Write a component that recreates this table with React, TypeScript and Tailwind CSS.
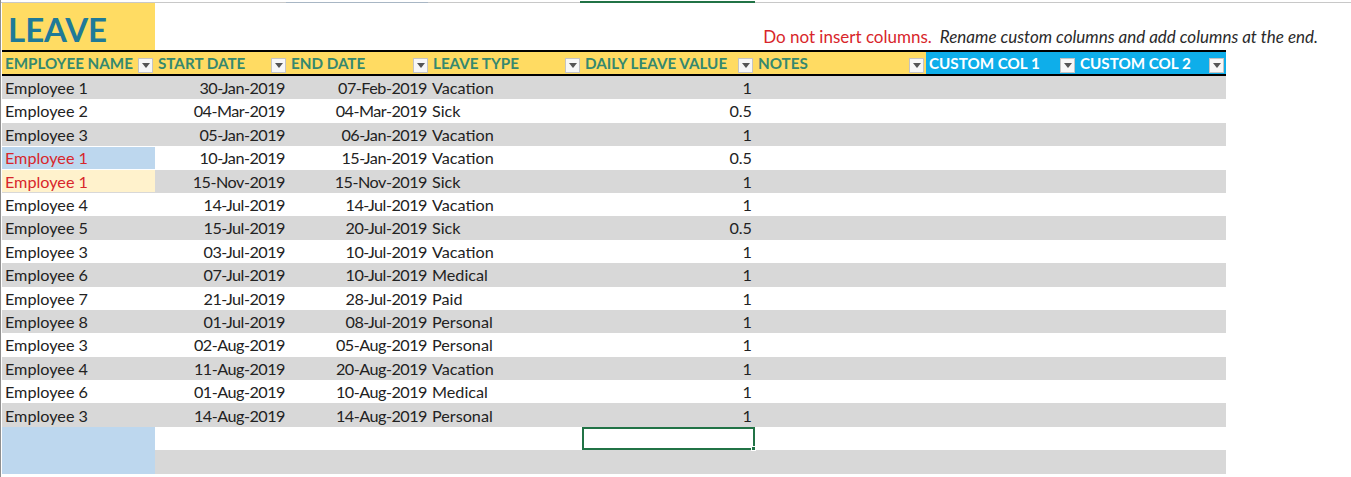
import React from 'react';

type Row = { name: string; start: string; end: string; type: string; value: string; nameBg?: string; red?: boolean };

const rows: Row[] = [
  { name: 'Employee 1', start: '30-Jan-2019', end: '07-Feb-2019', type: 'Vacation', value: '1' },
  { name: 'Employee 2', start: '04-Mar-2019', end: '04-Mar-2019', type: 'Sick', value: '0.5' },
  { name: 'Employee 3', start: '05-Jan-2019', end: '06-Jan-2019', type: 'Vacation', value: '1' },
  { name: 'Employee 1', start: '10-Jan-2019', end: '15-Jan-2019', type: 'Vacation', value: '0.5', nameBg: 'bg-[#bdd7ee]', red: true },
  { name: 'Employee 1', start: '15-Nov-2019', end: '15-Nov-2019', type: 'Sick', value: '1', nameBg: 'bg-[#fff2cc]', red: true },
  { name: 'Employee 4', start: '14-Jul-2019', end: '14-Jul-2019', type: 'Vacation', value: '1' },
  { name: 'Employee 5', start: '15-Jul-2019', end: '20-Jul-2019', type: 'Sick', value: '0.5' },
  { name: 'Employee 3', start: '03-Jul-2019', end: '10-Jul-2019', type: 'Vacation', value: '1' },
  { name: 'Employee 6', start: '07-Jul-2019', end: '10-Jul-2019', type: 'Medical', value: '1' },
  { name: 'Employee 7', start: '21-Jul-2019', end: '28-Jul-2019', type: 'Paid', value: '1' },
  { name: 'Employee 8', start: '01-Jul-2019', end: '08-Jul-2019', type: 'Personal', value: '1' },
  { name: 'Employee 3', start: '02-Aug-2019', end: '05-Aug-2019', type: 'Personal', value: '1' },
  { name: 'Employee 4', start: '11-Aug-2019', end: '20-Aug-2019', type: 'Vacation', value: '1' },
  { name: 'Employee 6', start: '01-Aug-2019', end: '10-Aug-2019', type: 'Medical', value: '1' },
  { name: 'Employee 3', start: '14-Aug-2019', end: '14-Aug-2019', type: 'Personal', value: '1' },
];

const cols = 'grid grid-cols-[153px_133px_142px_152px_173px_171px_151px_149px]';

const FilterButton = () => (
  <span className="mb-[1px] flex h-[15px] w-[15px] shrink-0 items-center justify-center self-end border border-[#c4c4c4] bg-[#f7f7f7]">
    <svg width="8" height="5" viewBox="0 0 8 5">
      <path d="M0 0 L8 0 L4 5 Z" fill="#555" />
    </svg>
  </span>
);

const HeaderCell = ({ label, blue }: { label: string; blue?: boolean }) => (
  <div className={`flex items-center justify-between pl-[3px] pr-[2px] ${blue ? 'bg-[#0eaeea] text-white' : 'bg-[#ffdb62] text-[#35886f]'}`}>
    <span className="pt-[2px] font-bold text-[15.2px] leading-none whitespace-nowrap">{label}</span>
    <FilterButton />
  </div>
);

export default function App() {
  return (
    <div className="relative h-[477px] w-[1351px] overflow-hidden bg-white border-l border-[#8f8f8f] text-[#222] [font-family:Lato,'Liberation_Sans',sans-serif]">
      {/* column header strip of the sheet */}
      <div className="flex h-[3px] items-end">
        <div className="h-[1px] w-[285px] bg-[#c8c8c8]" />
        <div className="h-[1px] w-[142px] bg-[#a8b6c4]" />
        <div className="h-[1px] w-[152px] bg-[#c8c8c8]" />
        <div className="h-[2px] w-[175px] bg-[#217346]" />
        <div className="h-[1px] flex-1 bg-[#c8c8c8]" />
      </div>

      {/* title row */}
      <div className="flex h-[47px] pl-[1px]">
        <div className="flex w-[153px] items-end bg-[#ffdc63] pb-[4px] pl-[6px]">
          <span className="text-[33px] font-bold leading-none text-[#1f7a98]">LEAVE</span>
        </div>
        <div className="flex flex-1 items-end justify-end pb-[5px] pr-[33px] text-[17px] leading-none whitespace-nowrap">
          <span className="text-[#d8262b]">Do not insert columns.</span>
          <span className="ml-[8px] italic text-[#2a2a2a]">Rename custom columns and add columns at the end.</span>
        </div>
      </div>

      {/* table */}
      <div className="w-[1225px] pl-[1px]">
        <div className={`${cols} h-[26px] border-y-2 border-black`}>
          <HeaderCell label="EMPLOYEE NAME" />
          <HeaderCell label="START DATE" />
          <HeaderCell label="END DATE" />
          <HeaderCell label="LEAVE TYPE" />
          <HeaderCell label="DAILY LEAVE VALUE" />
          <HeaderCell label="NOTES" />
          <HeaderCell label="CUSTOM COL 1" blue />
          <HeaderCell label="CUSTOM COL 2" blue />
        </div>

        {rows.map((r, i) => (
          <div key={i} className={`${cols} h-[23.4px] items-center pt-[1px] text-[16.2px] leading-none ${i % 2 === 0 ? 'bg-[#d8d8d8]' : 'bg-white'}`}>
            <div className={`-mt-[1px] flex h-full items-center pl-[3px] pt-[1px] ${r.nameBg ?? ''} ${r.red ? 'text-[#d8262b]' : ''}`}>{r.name}</div>
            <div className="pr-[3px] text-right tracking-[-0.5px]">{r.start}</div>
            <div className="pr-[3px] text-right tracking-[-0.5px]">{r.end}</div>
            <div className="pl-[2px]">{r.type}</div>
            <div className="pr-[3px] text-right">{r.value}</div>
            <div />
            <div />
            <div />
          </div>
        ))}

        {/* empty rows with the selected cell */}
        <div className={`${cols} h-[23.4px] bg-white`}>
          <div className="bg-[#bdd7ee]" />
          <div />
          <div />
          <div />
          <div className="relative border-2 border-[#217346]">
            <span className="absolute -bottom-[3px] -right-[3px] h-[5px] w-[5px] border border-white bg-[#217346]" />
          </div>
          <div />
          <div />
          <div />
        </div>
        <div className={`${cols} h-[23.4px] bg-[#d8d8d8]`}>
          <div className="bg-[#bdd7ee]" />
        </div>
      </div>
    </div>
  );
}
